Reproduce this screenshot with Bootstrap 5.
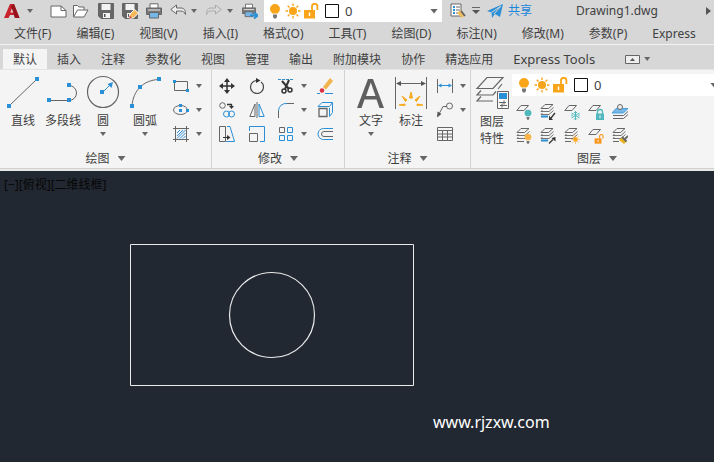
<!DOCTYPE html>
<html lang="zh-CN">
<head>
<meta charset="utf-8">
<meta name="viewport" content="width=device-width, initial-scale=1">
<title>Drawing1.dwg</title>
<link href="https://cdn.jsdelivr.net/npm/bootstrap@5.3.0/dist/css/bootstrap.min.css" rel="stylesheet">
<style>
:root { --ink:#3f3f3f; --blue:#2b8fd6; --bar:#d7d7d7; --panel:#f4f4f4; --rule:#d2d2d2; }
body { font-family:"Noto Sans","Noto Sans CJK SC",sans-serif; font-size:12px; line-height:16px; color:var(--ink); background:#222831; }
.btn { --bs-btn-font-size:12px; --bs-btn-line-height:16px; --bs-btn-color:var(--ink); --bs-btn-padding-x:0; --bs-btn-padding-y:0; --bs-btn-border-width:0; --bs-btn-border-radius:0; white-space:nowrap; }
svg { display:block; flex:none; fill:none; stroke:#666; stroke-width:1; }
.b { stroke:var(--blue); } .bf { fill:var(--blue); stroke:none; }
.tri { flex:none; width:6px; height:4px; background:#666; clip-path:polygon(0 0,100% 0,50% 100%); }
.tri-lg { width:8px; height:5px; }
.title-bar { background:var(--bar); height:24px; }
.quick .btn { width:24px; height:22px; display:flex; align-items:center; justify-content:center; }
.quick .btn-thin { width:12px; }
.layer-box { background:#fff; height:22px; padding-left:4px; gap:2px; }
.layer-box .swatch { margin:0 0 0 4px; }
.layer-box select { font-size:13px; line-height:18px; color:var(--ink); appearance:none; outline:0; min-width:0; }
.quick .layer-box { width:178px; padding-left:3px; }
.share { --bs-btn-color:#1c86d8; }
.file-name { line-height:22px; }
.menu-bar { background:var(--bar); height:21px; gap:25px; padding-left:14px; border-bottom:1px solid #f2f2f2; }
.menu-bar a, .tab-bar a { color:var(--ink); text-decoration:none; white-space:nowrap; }
.tab-bar { background:var(--bar); height:24px; padding:4px 0 0 3px; }
.tab-bar a { padding:3px 10px 1px; }
.tab-bar a.active { background:var(--panel); }
.tab-bar a.latin { font-size:13px; padding-top:2px; }
.ribbon { background:var(--panel); border-top:1px solid #e4e4e4; border-bottom:1px solid var(--rule); }
.panel { border-right:1px solid var(--rule); padding-top:4px; }
.panel-name { height:20px; padding-top:1px; }
.tools { height:74px; }
.big { width:40px; display:flex; flex-direction:column; align-items:center; justify-content:flex-start; }
.big-wide { width:44px; }
.big svg { margin-bottom:3px; }
.big .tri { margin-top:3px; }
.tool { width:24px; height:24px; display:flex; align-items:center; justify-content:center; }
.tool-30 { width:30px; }
.tool-drop { width:38px; gap:7px; padding-left:6px; justify-content:flex-start; }
.pad-draw { padding-left:3px; padding-right:6px; }
.pad-modify { padding-right:4px; }
.pad-note { padding-left:6px; padding-right:1px; }
.panel-layers { flex:1 0 252px; padding-left:1px; }
.panel-layers .btn { line-height:17px; }
.edge { background:#e8e8e8; height:2px; }
.model { background:#222831; min-height:200px; }
.view-label { color:#050607; padding:6px 0 0 4px; }
.shapes { left:130px; top:73px; stroke:#e8eaec; }
.site { left:433px; top:240px; font-size:16px; line-height:22px; color:#fff; }
</style>
</head>
<body class="vh-100 d-flex flex-column overflow-hidden">
<svg width="0" height="0" class="position-absolute" aria-hidden="true">
  <symbol id="bulb" viewBox="0 0 16 16"><path d="M8 1a5 5 0 0 0-5 5c0 2 1.300 3 2.400 4.500h5.200C11.700 9 13 8 13 6a5 5 0 0 0-5-5z" fill="currentColor" stroke="none"/><path d="M6 11.500h4v2.500l-1 1.500H7L6 14z" fill="#777" stroke="none"/></symbol>
  <symbol id="sun" viewBox="0 0 16 16"><circle cx="8" cy="8" r="4" fill="currentColor" stroke="none"/><path d="M8 .5v2.500M8 13v2.500M.5 8H3M13 8h2.500M2.700 2.700l1.800 1.800M11.500 11.500l1.800 1.800M2.700 13.300l1.800-1.800M11.500 4.500l1.800-1.800" stroke="currentColor" stroke-width="1.400"/></symbol>
  <symbol id="unlock" viewBox="0 0 16 16"><path d="M1 7h11v8.500H1z" fill="currentColor" stroke="none"/><path d="M9 7V3.500a2.700 2.700 0 0 1 5.400 0V7" stroke="currentColor" stroke-width="1.800"/><path d="M6.500 9.500v3.500" stroke="#fff" stroke-width="1.400"/></symbol>
  <symbol id="sheet" viewBox="0 0 16 16"><path d="M5 1.500h7.500L8 6.500H.8z"/></symbol>
  <symbol id="stack" viewBox="0 0 16 16"><path d="M5 .5h8L8.500 4.500H1z"/><path d="M2.500 6L1 7.500h8L13.500 3.500M2.500 9L1 10.500h8l4.500-4" stroke-width=".9"/></symbol>
  <symbol id="disk" viewBox="0 0 16 16"><path d="M.5.5h15v15H3L.5 13z" fill="#666"/><path d="M3.500 1h9v6h-9zM5 10h7v5H5z" fill="#f3f3f3" stroke="none"/><path d="M6 11h1.500v3H6z" fill="#555" stroke="none"/></symbol>
  <symbol id="printer" viewBox="0 0 16 16"><path d="M4 5V.8h8V5" fill="#fff"/><path d="M.5 5h15v6.500H.5z" fill="#777"/><path d="M2 7h12" stroke="#eee"/><path d="M3.500 9.500h9v5.500h-9z" fill="#75b7e8"/></symbol>
</svg>

<header class="title-bar quick d-flex align-items-start overflow-hidden flex-shrink-0">
  <button class="btn" type="button" aria-label="应用程序"><svg width="16" height="16" viewBox="0 0 16 16"><path d="M0 15L6 1h4l5.500 14H11l-1-3H6l-1.500 3z" fill="#c8232c" stroke="none"/><path d="M10 1l5.500 14H11L7 3z" fill="#96141c" stroke="none"/><path d="M7.800 5.500L6.300 9.500h3z" fill="#e6c9ca" stroke="none"/></svg></button>
  <button class="btn btn-thin me-2" type="button" aria-label="应用程序菜单"><span class="tri"></span></button>
  <button class="btn ps-1" type="button" aria-label="新建"><svg width="17" height="16" viewBox="0 0 17 16"><path d="M1 3h10l5 4.500V14H1z" fill="#fff"/><path d="M11 3v4.500h5"/></svg></button>
  <button class="btn" type="button" aria-label="打开"><svg width="17" height="16" viewBox="0 0 17 16"><path d="M1.500 14V2.500h4L7 4h5v3" fill="#fff"/><path d="M1.500 14l4-7H16l-4 7z" fill="#fff"/></svg></button>
  <button class="btn ps-1" type="button" aria-label="保存"><svg width="16" height="16"><use href="#disk"/></svg></button>
  <button class="btn ps-1" type="button" aria-label="另存为"><svg width="17" height="16" viewBox="0 0 17 16"><use href="#disk" width="16" height="16"/><path d="M7 15l1-4 4.500-4.500 4 3.500-5 5z" fill="#f5b85b" stroke="#fff"/><path d="M7 15.500l.8-3 2.200 2z" fill="#d84b42" stroke="none"/></svg></button>
  <button class="btn ps-1" type="button" aria-label="打印"><svg width="16" height="16"><use href="#printer"/></svg></button>
  <button class="btn ps-1" type="button" aria-label="放弃"><svg width="16" height="16" viewBox="0 0 16 16"><path d="M.8 6.500L6.500 2v3H11c3 0 4.500 2 4.500 6.500C14.500 9 13 8 10.500 8h-4v3z" fill="#eee"/></svg></button>
  <button class="btn btn-thin" type="button" aria-label="放弃列表"><span class="tri"></span></button>
  <button class="btn ps-1" type="button" aria-label="重做"><svg width="16" height="16" viewBox="0 0 16 16"><path d="M15.200 6.500L9.500 2v3H5C2 5 .5 7 .5 11.500 1.500 9 3 8 5.500 8h4v3z" stroke="#aaa"/></svg></button>
  <button class="btn btn-thin" type="button" aria-label="重做列表"><span class="tri"></span></button>
  <button class="btn ps-1 me-1" type="button" aria-label="批处理打印"><svg width="16" height="16" viewBox="0 0 16 16"><use href="#printer" width="14" height="15"/><path d="M8 12.500h6M12 9.500l3.500 3-3.500 3" class="b" stroke-width="2"/></svg></button>
  <div class="layer-box d-flex align-items-center pe-1">
    <svg width="16" height="16" color="#f9a51a"><use href="#bulb"/></svg>
    <svg width="16" height="16" color="#f9a51a"><use href="#sun"/></svg>
    <svg width="16" height="16" color="#f9a51a"><use href="#unlock"/></svg>
    <svg class="swatch" width="14" height="14" viewBox="0 0 14 14"><path d="M.5.5h13v13H.5z" fill="#fff" stroke="#111"/></svg>
    <select class="flex-grow-1 border-0 bg-transparent ps-1" aria-label="图层"><option>0</option></select>
    <span class="tri tri-lg"></span>
  </div>
  <button class="btn ms-1" type="button" aria-label="特性匹配"><svg width="16" height="16" viewBox="0 0 16 16"><path d="M1 1h10v12H1z" fill="#fff"/><path d="M3 4h2M3 7h2M3 10h2" class="b" stroke-width="2"/><path d="M6 4h4M6 7h4M6 10h2"/><path d="M7 10l4-3 4 5-3 3z" fill="#f2bd59" stroke="none"/><path d="M11 8l4 5" stroke-width="2"/></svg></button>
  <button class="btn btn-thin" type="button" aria-label="自定义快速访问工具栏"><svg width="8" height="8" viewBox="0 0 8 8"><path d="M0 .5h8"/><path d="M0 3h8L4 7z" fill="#555" stroke="none"/></svg></button>
  <button class="btn share w-auto ms-1" type="button"><svg class="me-1" width="18" height="16" viewBox="0 0 18 16"><path d="M1 8L17 1l-3 13-5-3-3 4-.5-5.500z" class="bf"/><path d="M5.500 9.500L15 3 8 11" stroke="#d7d7d7"/></svg>共享</button>
  <span class="file-name flex-grow-1 text-center">Drawing1.dwg</span>
  <button class="btn btn-thin" type="button" aria-label="更多"><svg width="5" height="8" viewBox="0 0 5 8"><path d="M0 0l5 4-5 4z" fill="#555" stroke="none"/></svg></button>
</header>

<nav class="menu-bar d-flex align-items-center flex-shrink-0 overflow-hidden" aria-label="菜单栏">
  <a href="#">文件(F)</a><a href="#">编辑(E)</a><a href="#">视图(V)</a><a href="#">插入(I)</a><a href="#">格式(O)</a><a href="#">工具(T)</a><a href="#">绘图(D)</a><a href="#">标注(N)</a><a href="#">修改(M)</a><a href="#">参数(P)</a><a href="#">Express</a>
</nav>

<nav class="tab-bar d-flex flex-shrink-0 overflow-hidden" aria-label="功能区选项卡">
  <a class="active" href="#" aria-current="page">默认</a><a href="#">插入</a><a href="#">注释</a><a href="#">参数化</a><a href="#">视图</a><a href="#">管理</a><a href="#">输出</a><a href="#">附加模块</a><a href="#">协作</a><a href="#">精选应用</a><a class="latin" href="#">Express Tools</a>
  <button class="btn d-flex align-items-center gap-1 ms-3" type="button" aria-label="最小化功能区"><svg class="ms-1" width="15" height="9" viewBox="0 0 15 9"><path d="M.5.5h14v8H.5z" fill="#eee"/><path d="M5 6l2.500-3L10 6z" fill="#555" stroke="none"/></svg><span class="tri"></span></button>
</nav>

<main class="flex-grow-1 d-flex flex-column overflow-hidden">
<div class="ribbon d-flex flex-shrink-0 overflow-hidden">
  <section class="panel flex-shrink-0 d-flex flex-column">
    <div class="tools d-flex pad-draw">
      <button class="btn big" type="button"><svg width="36" height="36" viewBox="0 0 36 36"><path d="M4 32L32 5"/><path d="M2 30h4v4H2zM30 3h4v4h-4z" class="bf"/></svg>直线</button>
      <button class="btn big" type="button"><svg width="36" height="36" viewBox="0 0 36 36"><path d="M4 26.500h20a7.500 7.500 0 0 0 0-15"/><path d="M2 24h4v4H2zM22 24h4v4h-4zM22 9h4v4h-4z" class="bf"/></svg>多段线</button>
      <button class="btn big" type="button"><svg width="36" height="36" viewBox="0 0 36 36"><circle cx="18" cy="18" r="15.500" stroke-width="1.200"/><path d="M18 18l8-8" class="b"/><path d="M15 16h4v4h-4zM28 8l-1.500 6-4-4z" class="bf"/></svg>圆<span class="tri"></span></button>
      <button class="btn big big-wide" type="button"><svg width="36" height="36" viewBox="0 0 36 36"><path d="M5 32C6 17 16 6 32 5.500"/><path d="M3 30h4v4H3zM11 11h4v4h-4zM30 3h4v4h-4z" class="bf"/></svg>圆弧<span class="tri"></span></button>
      <div>
        <button class="btn tool tool-drop" type="button" aria-label="矩形"><svg width="16" height="16" viewBox="0 0 16 16"><path d="M1.500 3.500h13v9h-13z"/><path d="M0 2h3v3H0zM13 11h3v3h-3z" class="bf"/></svg><span class="tri"></span></button>
        <button class="btn tool tool-drop" type="button" aria-label="椭圆"><svg width="16" height="16" viewBox="0 0 16 16"><ellipse cx="7.500" cy="8" rx="7" ry="4.500"/><path d="M6 7h3v3H6zM6 2h3v3H6zM13 7h3v3h-3z" class="bf"/></svg><span class="tri"></span></button>
        <button class="btn tool tool-drop" type="button" aria-label="图案填充"><svg width="16" height="16" viewBox="0 0 16 16"><path d="M2.500 0v16M13.500 0v16M0 2.500h16M0 13.500h16"/><path d="M4 7l3-3M4 10l6-6M4 12.500L12.500 4M7 12.500L12.500 7M10 12.500l2.500-2.500" class="b"/></svg><span class="tri"></span></button>
      </div>
    </div>
    <div class="panel-name d-flex align-items-center justify-content-center gap-2">绘图<span class="tri tri-lg"></span></div>
  </section>

  <section class="panel flex-shrink-0 d-flex flex-column">
    <div class="tools pad-modify">
      <div class="d-flex">
        <button class="btn tool tool-30" type="button" aria-label="移动"><svg width="16" height="16" viewBox="0 0 16 16"><path d="M8 2v12M2 8h12" stroke="#333" stroke-width="1.500"/><path d="M8 0l3 4H5zM8 16l3-4H5zM0 8l4-3v6zM16 8l-4-3v6z" fill="#333" stroke="none"/></svg></button>
        <button class="btn tool tool-30" type="button" aria-label="旋转"><svg width="16" height="16" viewBox="0 0 16 16"><path d="M8 2.500A6.500 6.500 0 1 0 14.500 9c0-2-1-4-2.500-5" stroke="#444" stroke-width="1.200"/><path d="M7 0l4.500 2.500L7 5z" fill="#333" stroke="none"/></svg></button>
        <button class="btn tool tool-drop" type="button" aria-label="修剪"><svg width="16" height="16" viewBox="0 0 16 16"><path d="M0 1.500h16" class="b" stroke-dasharray="3 1"/><path d="M4 3l7 8M11 2L7 11" stroke="#333" stroke-width="2"/><circle cx="6" cy="13" r="2" stroke="#333" stroke-width="1.500"/><circle cx="12" cy="12" r="2" stroke="#333" stroke-width="1.500"/></svg><span class="tri"></span></button>
        <button class="btn tool tool-30" type="button" aria-label="删除"><svg width="16" height="16" viewBox="0 0 16 16"><path d="M6 9l7-9 3 3-7 8.500z" fill="#f2b44c" stroke="none"/><circle cx="5" cy="12.500" r="2.300" fill="#dc3344" stroke="none"/><path d="M0 15.500h3M8 15.500h8" class="b"/></svg></button>
      </div>
      <div class="d-flex">
        <button class="btn tool tool-30" type="button" aria-label="复制"><svg width="16" height="16" viewBox="0 0 16 16"><circle cx="3.500" cy="3.500" r="2.800"/><path d="M8 2.500h4.500V5" stroke="#333" stroke-width="1.400"/><path d="M10 4h5l-2.500 3z" fill="#333" stroke="none"/><circle cx="7.500" cy="12" r="3" class="b"/><circle cx="12.500" cy="12" r="3" class="b"/></svg></button>
        <button class="btn tool tool-30" type="button" aria-label="镜像"><svg width="16" height="16" viewBox="0 0 16 16"><path d="M6 2v12.500H.8z"/><path d="M8 0v16"/><path d="M10 2v12.500h5.200z" class="b"/></svg></button>
        <button class="btn tool tool-drop" type="button" aria-label="圆角"><svg width="16" height="16" viewBox="0 0 16 16"><path d="M.5 16V9M9 1.500h7"/><path d="M.5 9A7.500 7.500 0 0 1 9 1.500" class="b"/></svg><span class="tri"></span></button>
        <button class="btn tool tool-30" type="button" aria-label="分解"><svg width="16" height="16" viewBox="0 0 16 16"><path d="M2 6.500h8v8H2z" stroke-width="1.300"/><path d="M1 4.500l4-4h10.500l-3 4zM12.500 6v8.500l3-4V1" class="b"/></svg></button>
      </div>
      <div class="d-flex">
        <button class="btn tool tool-30" type="button" aria-label="拉伸"><svg width="16" height="16" viewBox="0 0 16 16"><path d="M6.500.5h-6v15h6z"/><path d="M8 .5h3l4.500 15H7" class="b"/><path d="M4 11.500h5" stroke="#333"/><path d="M8 9l3.500 2.500L8 14z" fill="#333" stroke="none"/></svg></button>
        <button class="btn tool tool-30" type="button" aria-label="缩放"><svg width="16" height="16" viewBox="0 0 16 16"><path d="M.5 5V.5h15v15H11" class="b"/><path d="M.5 7.500h8v8h-8z"/></svg></button>
        <button class="btn tool tool-drop" type="button" aria-label="阵列"><svg width="16" height="16" viewBox="0 0 16 16"><path d="M1.500 1.500h5v5h-5z"/><path d="M9.500 1.500h5v5h-5zM1.500 9.500h5v5h-5zM9.500 9.500h5v5h-5z" class="b"/></svg><span class="tri"></span></button>
        <button class="btn tool tool-30" type="button" aria-label="偏移"><svg width="16" height="16" viewBox="0 0 16 16"><path d="M16 2.500H6.500a5.500 5.500 0 0 0 0 11H16" class="b"/><path d="M16 5.500H7a2.500 2.500 0 0 0 0 5h9"/></svg></button>
      </div>
    </div>
    <div class="panel-name d-flex align-items-center justify-content-center gap-2">修改<span class="tri tri-lg"></span></div>
  </section>

  <section class="panel flex-shrink-0 d-flex flex-column">
    <div class="tools d-flex pad-note">
      <button class="btn big" type="button"><svg width="36" height="36" viewBox="0 0 36 36"><path d="M4 34L15 5h5l11 29h-4.500l-3-8.500h-12L8.500 34zM13 22h9.500L17.800 8.500z" fill="#5f5f5f" stroke="none"/></svg>文字<span class="tri"></span></button>
      <button class="btn big" type="button"><svg width="36" height="36" viewBox="0 0 36 36"><path d="M2.500 3v32M33.500 3v32M4 9.500h28"/><path d="M3 9.500l5-2.500v5zM33 9.500L28 7v5z" fill="#555" stroke="none"/><path d="M18 18l1.500 6h-3zM9 22l5 4-1.500 1.500zM27 22l-5 4 1.500 1.500zM6 31l6-1v1.500zM30 31l-6-1v1.500z" fill="#f5aa1c" stroke="#f5aa1c"/></svg>标注</button>
      <div>
        <button class="btn tool tool-drop" type="button" aria-label="线性标注"><svg width="16" height="16" viewBox="0 0 16 16"><path d="M.5 1v14M15.500 1v14"/><path d="M2 7.500h12" class="b"/><path d="M1 7.500l3.500-2v4zM15 7.500l-3.500-2v4z" class="bf"/></svg><span class="tri"></span></button>
        <button class="btn tool tool-drop" type="button" aria-label="引线"><svg width="16" height="16" viewBox="0 0 16 16"><circle cx="12.500" cy="4" r="3"/><path d="M9.500 4.500H6L2 12"/><path d="M0 15.500l.5-6L4.500 12z" fill="#555" stroke="none"/></svg><span class="tri"></span></button>
        <button class="btn tool tool-drop" type="button" aria-label="表格"><svg width="16" height="16" viewBox="0 0 16 16"><path d="M.5 1.500h15v13H.5zM.5 4.500h15M.5 8h15M.5 11h15M5.500 4.500v10M10.500 4.500v10"/></svg></button>
      </div>
    </div>
    <div class="panel-name d-flex align-items-center justify-content-center gap-2">注释<span class="tri tri-lg"></span></div>
  </section>

  <section class="panel panel-layers d-flex flex-column">
    <div class="tools d-flex">
      <button class="btn big flex-shrink-0" type="button"><svg width="36" height="36" viewBox="0 0 36 36"><path d="M13 3.500h16L19 14.500H3zM7 16.500l-4 4.500h16l3-3.500M7 22.500l-4 4.500h16M24 15l4-5" stroke-width="1.200"/><path d="M23.500 17.500h11v17h-11z" fill="#f8f8f8"/><path d="M25 19h8v6h-8z" class="bf"/><path d="M25 28.500h7M26 31.500h7M30 26.500v4M28 29.500v4"/></svg>图层<br>特性</button>
      <div class="flex-grow-1">
        <div class="layer-box d-flex align-items-center">
          <svg width="16" height="16" color="#f9a51a"><use href="#bulb"/></svg>
          <svg width="16" height="16" color="#f9a51a"><use href="#sun"/></svg>
          <svg width="16" height="16" color="#f9a51a"><use href="#unlock"/></svg>
          <svg class="swatch" width="14" height="14" viewBox="0 0 14 14"><path d="M.5.5h13v13H.5z" fill="#fff" stroke="#111"/></svg>
          <select class="flex-grow-1 border-0 bg-transparent ps-1" aria-label="当前图层"><option>0</option></select>
          <span class="tri tri-lg me-1"></span>
        </div>
        <div class="d-flex pt-1">
          <button class="btn tool" type="button" aria-label="关闭图层"><svg width="16" height="16" viewBox="0 0 16 16" color="#4fb9bd"><use href="#sheet" width="16" height="16"/><use href="#bulb" x="6" y="5" width="12" height="11"/></svg></button>
          <button class="btn tool" type="button" aria-label="隔离"><svg width="16" height="16" viewBox="0 0 16 16"><use href="#stack" width="16" height="16"/><path d="M1 12.500h7" class="b" stroke-width="2"/><path d="M15 9l-4 5" stroke="#333" stroke-width="1.300"/><path d="M9 16v-4.500l4 4.500z" fill="#333" stroke="none"/></svg></button>
          <button class="btn tool" type="button" aria-label="冻结"><svg width="16" height="16" viewBox="0 0 16 16"><use href="#sheet" width="16" height="16"/><path d="M11.500 7v9M7.500 9l8 5M7.500 14l8-5M10 8l1.500 1.500L13 8M10 15.500l1.500-1.500 1.500 1.500M8 10.500v2M15 10.500v2" stroke="#4fb9bd"/></svg></button>
          <button class="btn tool" type="button" aria-label="锁定"><svg width="16" height="16" viewBox="0 0 16 16"><use href="#sheet" width="16" height="16"/><path d="M8 9.500h8V16H8z" fill="#4fb9bd" stroke="none"/><path d="M9.500 10V8a2.500 2.500 0 0 1 5 0v2" stroke="#4fb9bd" stroke-width="1.300"/><path d="M12 11.500v2.500" stroke="#fff"/></svg></button>
          <button class="btn tool" type="button" aria-label="置为当前"><svg width="16" height="16" viewBox="0 0 16 16"><path d="M4 4.500h12l-4.500 4.500H0z" fill="#75b7e8" stroke="#4a9fdc"/><circle cx="8" cy="3" r="2.500" fill="#eee"/><path d="M1 11.500h10.500l4.500-4M1 14.500h10.500l4.500-4"/></svg></button>
        </div>
        <div class="d-flex">
          <button class="btn tool" type="button" aria-label="打开所有图层"><svg width="16" height="16" viewBox="0 0 16 16" color="#f9b54a"><use href="#stack" width="16" height="16"/><path d="M1 13.500h7"/><use href="#bulb" x="6" y="5" width="12" height="11"/></svg></button>
          <button class="btn tool" type="button" aria-label="取消隔离"><svg width="16" height="16" viewBox="0 0 16 16"><use href="#stack" width="16" height="16"/><path d="M1 12.500h7" class="b" stroke-width="2"/><path d="M9 15.500l4-4" stroke="#333" stroke-width="1.300"/><path d="M15.500 9v4.500L11.500 10z" fill="#333" stroke="none"/></svg></button>
          <button class="btn tool" type="button" aria-label="解冻所有图层"><svg width="16" height="16" viewBox="0 0 16 16" color="#f9a51a"><use href="#stack" width="16" height="16"/><path d="M1 13.500h6"/><use href="#sun" x="7" y="7" width="9" height="9"/></svg></button>
          <button class="btn tool" type="button" aria-label="解锁"><svg width="16" height="16" viewBox="0 0 16 16" color="#f9961a"><use href="#sheet" width="16" height="16"/><use href="#unlock" x="6" y="6" width="10" height="10"/></svg></button>
          <button class="btn tool" type="button" aria-label="匹配图层"><svg width="16" height="16" viewBox="0 0 16 16"><use href="#stack" width="16" height="16"/><path d="M1 13.500h6"/><path d="M7 12l4-3 4 4-3 3z" fill="#e9b320" stroke="none"/><path d="M10 9l4.500 4.500M13 11l3-3" stroke-width="1.800"/></svg></button>
        </div>
      </div>
    </div>
    <div class="panel-name d-flex align-items-center justify-content-center gap-2">图层<span class="tri tri-lg"></span></div>
  </section>
</div>
<div class="edge flex-shrink-0"></div>

<div class="model flex-grow-1 position-relative overflow-hidden">
  <div class="view-label">[−][俯视][二维线框]</div>
  <svg class="shapes position-absolute" width="284" height="143" viewBox="0 0 284 143" role="img" aria-label="矩形和圆"><path d="M.5.5h283v141H.5z"/><circle cx="142" cy="71" r="42.500" stroke-width="1.200"/></svg>
  <div class="site position-absolute">www.rjzxw.com</div>
</div>
</main>
<script src="https://cdn.jsdelivr.net/npm/bootstrap@5.3.0/dist/js/bootstrap.bundle.min.js"></script>
</body>
</html>
